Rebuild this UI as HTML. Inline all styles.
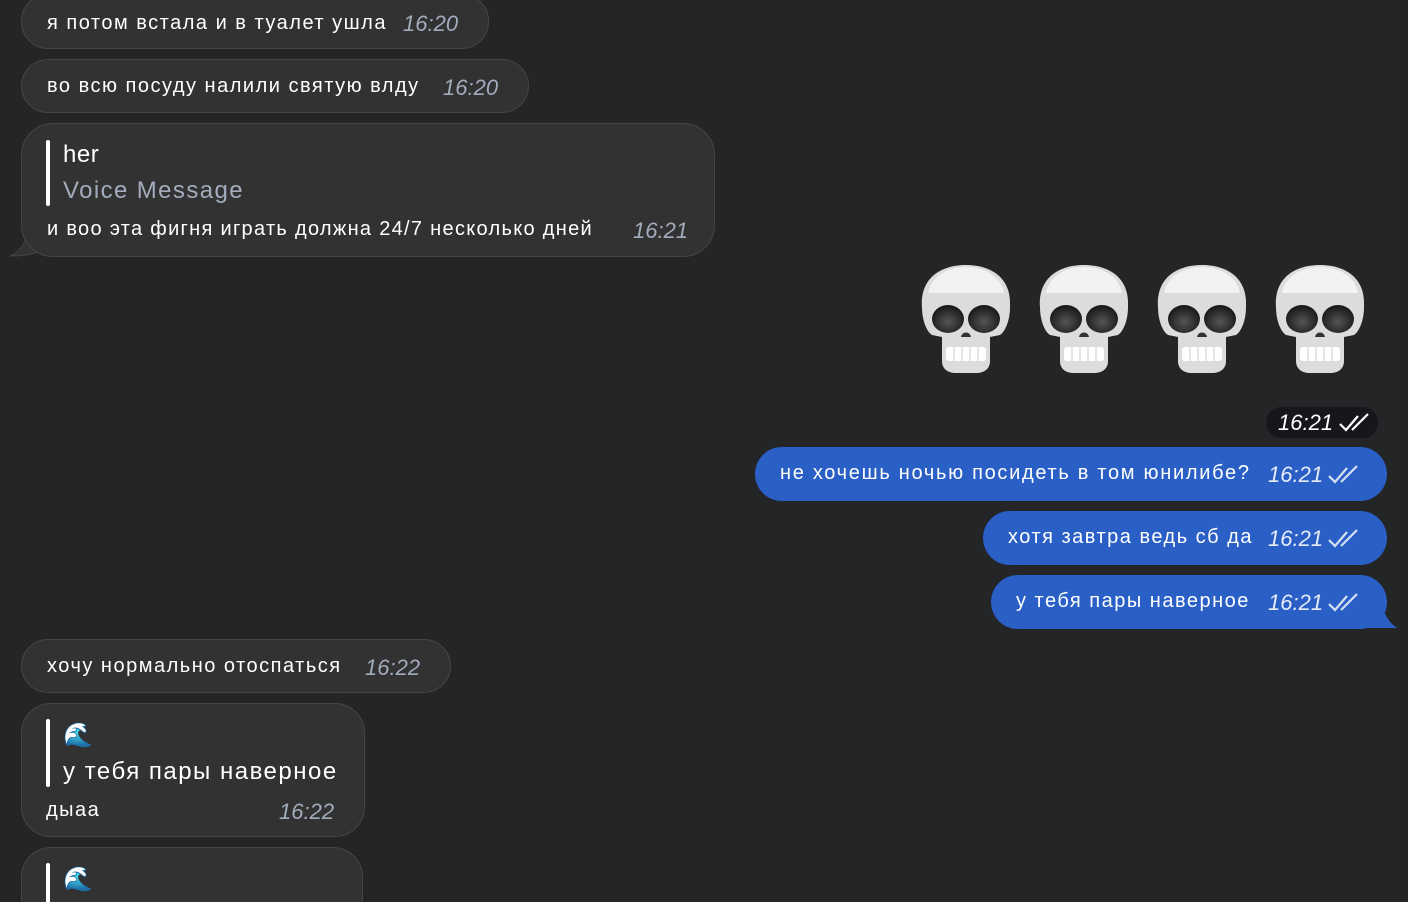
<!DOCTYPE html>
<html style="overflow:hidden;height:902px"><head><meta charset="utf-8"><style>
body{margin:0;width:1408px;height:902px;overflow:hidden;background:#232527;font-family:"Liberation Sans","DejaVu Sans",sans-serif;position:relative}
.b{position:absolute;background:#323232;border:1px solid #454545;box-sizing:border-box;border-radius:27px}
.u{background:#2a5fc6;border:none}
.t{position:absolute;color:#fff;font-size:20px;letter-spacing:1.5px;white-space:nowrap;line-height:24px}
.tm{position:absolute;color:#a3acbd;font-size:22px;font-style:italic;line-height:24px;white-space:nowrap}
.u .tm{color:#e6ecf8}
.bar{position:absolute;width:4px;background:#fff;border-radius:2px}
.chk{position:absolute}
</style></head><body>

<div class="b" style="left:21px;top:-6px;width:468px;height:55px"><span class="t" style="left:25px;top:16px">я потом встала и в туалет ушла</span><span class="tm" style="left:381px;top:17px">16:20</span></div>
<div class="b" style="left:21px;top:59px;width:508px;height:54px"><span class="t" style="left:25px;top:14px">во всю посуду налили святую влду</span><span class="tm" style="left:421px;top:16px">16:20</span></div>

<svg style="position:absolute;left:8px;top:228px" width="40" height="30"><path d="M2 28 Q14 24 20 6 L30 24 Q20 28 2 28Z" fill="#323232" stroke="#454545"/></svg>
<div class="b" style="left:21px;top:123px;width:694px;height:134px;border-radius:32px"><div class="bar" style="left:24px;top:16px;height:66px"></div><span class="t" style="left:41px;top:19px;font-size:24px;letter-spacing:0.5px">her</span><span class="t" style="left:41px;top:55px;font-size:24px;letter-spacing:1.4px;color:#a3acbd">Voice Message</span><span class="t" style="left:25px;top:93px;letter-spacing:1.3px">и воо эта фигня играть должна 24/7 несколько дней</span><span class="tm" style="left:611px;top:95px">16:21</span></div>

<svg style="position:absolute;left:918px;top:263px" width="460" height="112" viewBox="0 0 460 112">
<defs><radialGradient id="e" cx="0.5" cy="0.6" r="0.6"><stop offset="0" stop-color="#555"/><stop offset="1" stop-color="#151515"/></radialGradient><g id="sk">
<path d="M4 44 C2 14 24 2 48 2 C72 2 94 14 92 44 C92 56 88 68 82 72 L72 74 L72 98 C72 106 66 110 58 110 L38 110 C30 110 24 106 24 98 L24 74 L14 72 C8 68 4 56 4 44Z" fill="#dcdcdc"/>
<path d="M10 30 C14 10 34 4 48 4 C62 4 82 10 86 30Z" fill="#f2f2f2"/>
<ellipse cx="30" cy="56" rx="16" ry="14" fill="url(#e)"/><ellipse cx="66" cy="56" rx="16" ry="14" fill="url(#e)"/>
<path d="M43 74 C44 68 52 68 53 74Z" fill="#333"/>
<rect x="28" y="84" width="40" height="14" rx="3" fill="#fff"/>
<path d="M36 84V98M44 84V98M52 84V98M60 84V98" stroke="#ccc"/>
</g></defs>
<use href="#sk" x="0"/><use href="#sk" x="118"/><use href="#sk" x="236"/><use href="#sk" x="354"/>
</svg>

<div style="position:absolute;left:1266px;top:407px;width:112px;height:31px;background:#16171a;border-radius:16px"><span class="tm" style="left:12px;top:4px;color:#fff">16:21</span>
<svg class="chk" style="left:72px;top:6px" width="34" height="20"><path d="M2 11 L8 17 L20 3 M14 17 L30 1" stroke="#fff" stroke-width="2.2" fill="none"/></svg></div>

<div class="b u" style="left:755px;top:447px;width:632px;height:54px"><span class="t" style="left:25px;top:14px;letter-spacing:1.7px">не хочешь ночью посидеть в том юнилибе?</span><span class="tm" style="left:513px;top:16px">16:21</span><svg class="chk" style="left:572px;top:18px" width="34" height="20"><path d="M2 11 L8 17 L20 3 M14 17 L30 1" stroke="#d6e0f5" stroke-width="2.2" fill="none"/></svg></div>
<div class="b u" style="left:983px;top:511px;width:404px;height:54px"><span class="t" style="left:25px;top:14px">хотя завтра ведь сб да</span><span class="tm" style="left:285px;top:16px">16:21</span><svg class="chk" style="left:344px;top:18px" width="34" height="20"><path d="M2 11 L8 17 L20 3 M14 17 L30 1" stroke="#d6e0f5" stroke-width="2.2" fill="none"/></svg></div>
<svg style="position:absolute;left:1360px;top:600px" width="40" height="30"><path d="M0 28 L38 28 Q28 24 22 6 L6 26Z" fill="#2a5fc6"/></svg>
<div class="b u" style="left:991px;top:575px;width:396px;height:54px"><span class="t" style="left:25px;top:14px">у тебя пары наверное</span><span class="tm" style="left:277px;top:16px">16:21</span><svg class="chk" style="left:336px;top:18px" width="34" height="20"><path d="M2 11 L8 17 L20 3 M14 17 L30 1" stroke="#d6e0f5" stroke-width="2.2" fill="none"/></svg></div>

<div class="b" style="left:21px;top:639px;width:430px;height:54px"><span class="t" style="left:25px;top:14px">хочу нормально отоспаться</span><span class="tm" style="left:343px;top:16px">16:22</span></div>

<div class="b" style="left:21px;top:703px;width:344px;height:134px;border-radius:30px"><div class="bar" style="left:24px;top:15px;height:68px"></div><span class="t" style="left:41px;top:20px;font-size:24px">🌊</span><span class="t" style="left:41px;top:56px;font-size:24px;letter-spacing:1.5px">у тебя пары наверное</span><span class="t" style="left:24px;top:94px">дыаа</span><span class="tm" style="left:257px;top:96px">16:22</span></div>
<div class="b" style="left:21px;top:847px;width:342px;height:55px;border-radius:30px 30px 0 0;border-bottom:none"><div class="bar" style="left:24px;top:15px;height:50px"></div><span class="t" style="left:41px;top:20px;font-size:24px">🌊</span></div>
</body></html>
